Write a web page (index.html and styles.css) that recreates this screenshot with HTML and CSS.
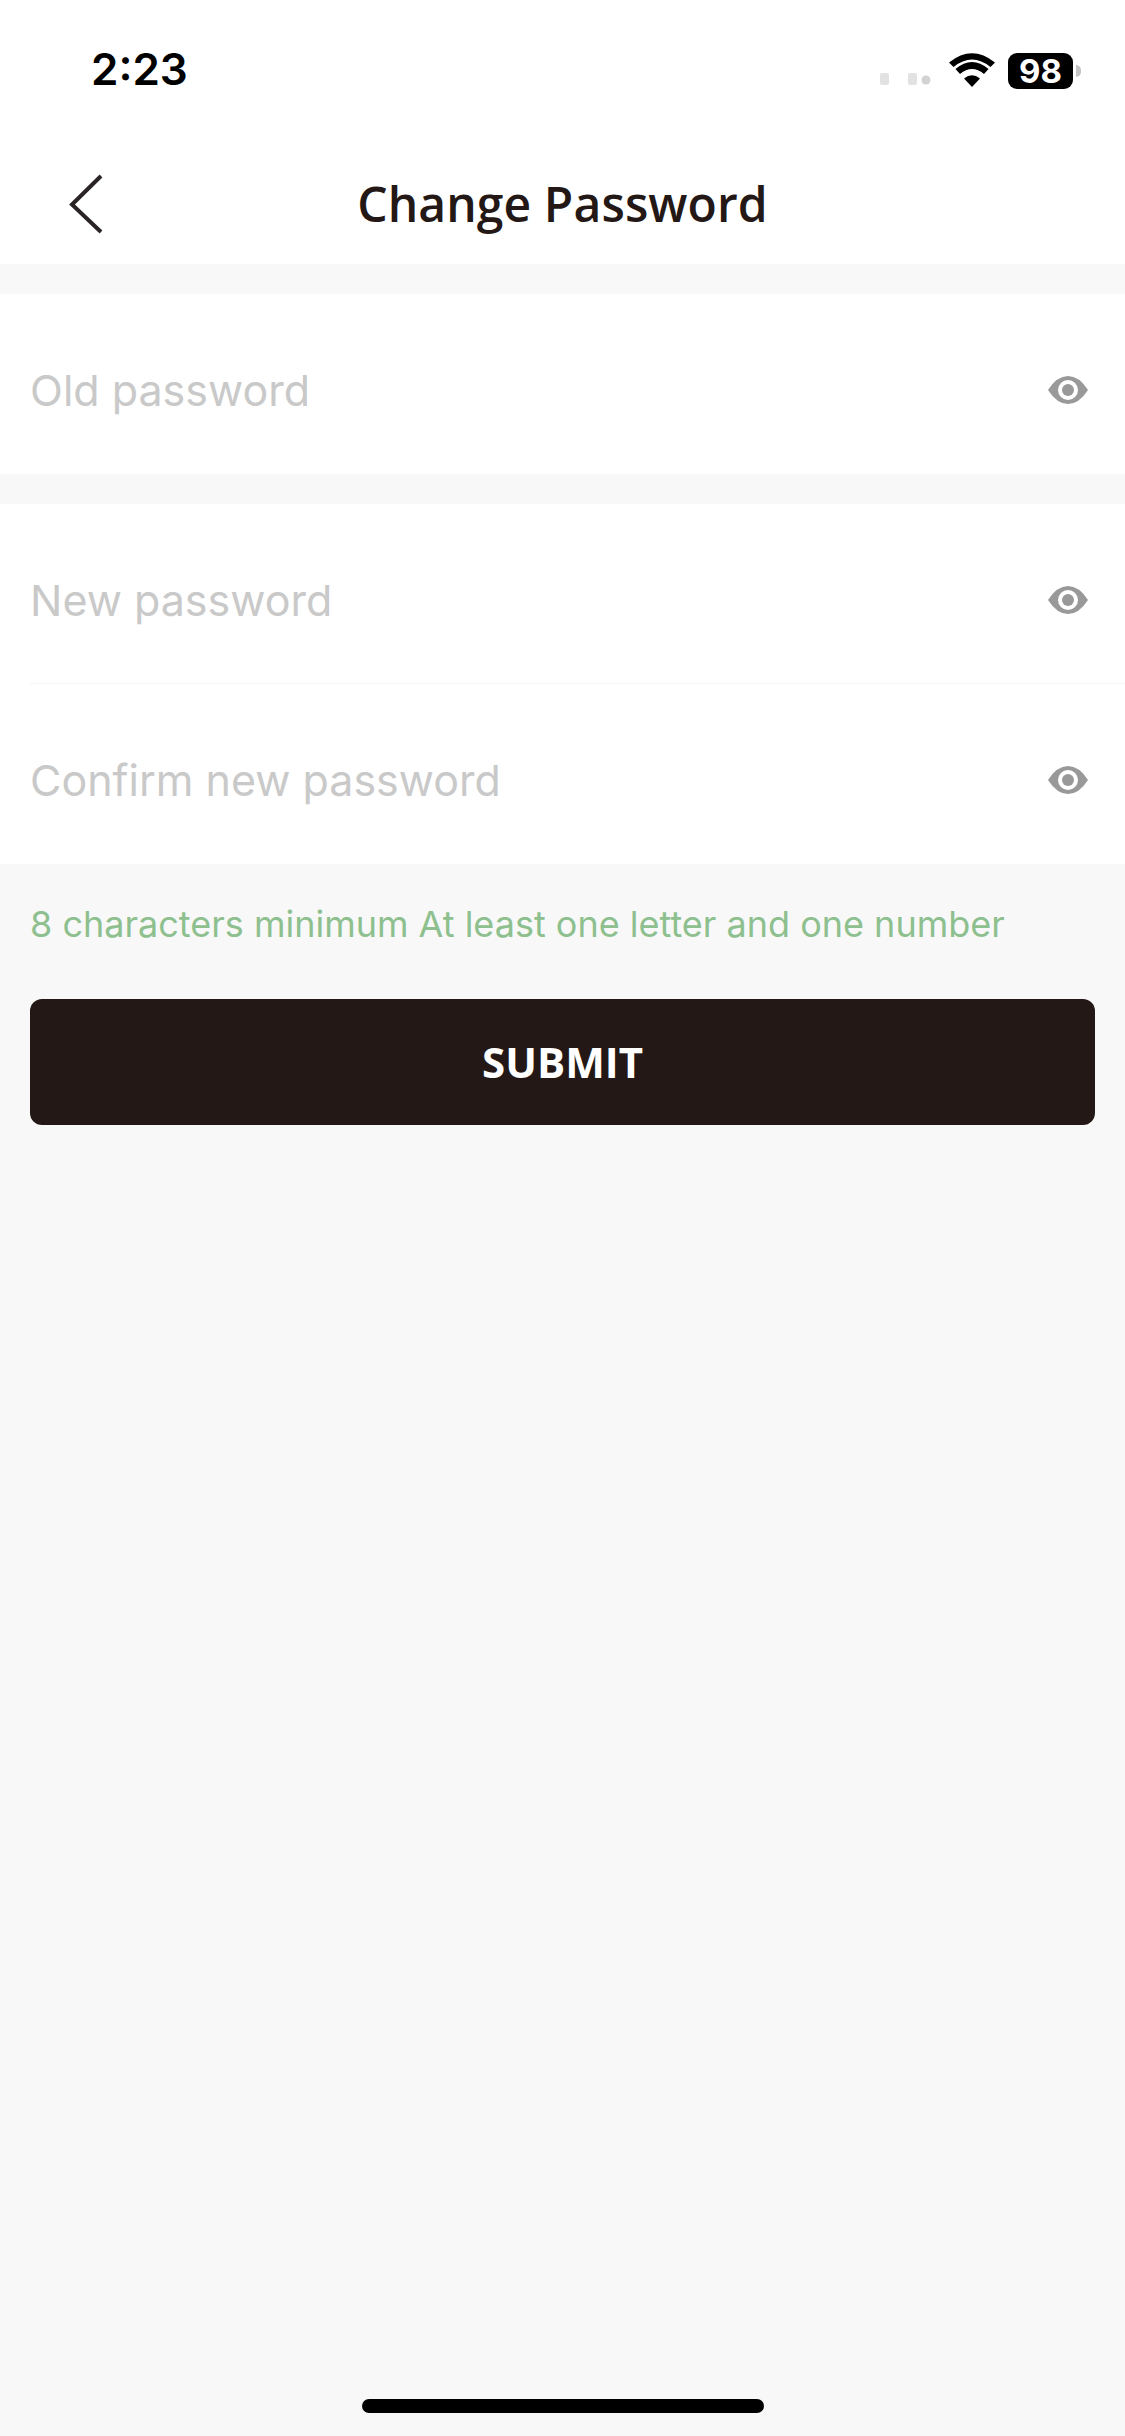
FILE: index.html
```html
<!DOCTYPE html>
<html lang="en">
<head>
<meta charset="utf-8">
<title>Change Password</title>
<link rel="stylesheet" href="styles.css">
</head>
<body>
<div class="screen">
  <header class="top">
    <div class="status">
      <span class="time">2:23</span>
      <div class="status-icons">
        <svg class="signal" width="54" height="14" viewBox="0 0 54 14"><rect x="0" y="1" width="9" height="12" rx="2" fill="#e2e2e2"/><rect x="28" y="1" width="9" height="12" rx="2" fill="#e2e2e2"/><circle cx="46" cy="8" r="4.5" fill="#d2d2d2"/></svg>
        <svg class="wifi" width="46" height="34" viewBox="0 0 46 34"><path d="M23 34 15 25.500Q23 19 31 25.500Z" fill="#000"/><path d="M11 21 6.500 16Q23 2 39.500 16L35 21Q23 11 11 21Z" fill="#000"/><path d="M4.500 14 0 9.500Q23-9 46 9.500L41.500 14Q23-1 4.500 14Z" fill="#000"/></svg>
        <span class="battery"><span class="battery-level">98</span><span class="battery-tip"></span></span>
      </div>
    </div>
    <nav class="nav">
      <svg class="back" width="36" height="62" viewBox="0 0 36 62"><path d="M33 3 4 31.500 33 59" fill="none" stroke="#2a2424" stroke-width="4"/></svg>
      <h1 class="title">Change Password</h1>
    </nav>
  </header>

  <section class="group">
    <div class="field">
      <span class="placeholder">Old password</span>
      <svg class="eye" width="40" height="28" viewBox="0 0 40 28"><path fill-rule="evenodd" d="M0 14Q9 0 20 0T40 14Q31 28 20 28T0 14ZM20 4a10 10 0 1 0 0 20 10 10 0 0 0 0-20Z" fill="#999"/><circle cx="20" cy="14" r="6" fill="#999"/></svg>
    </div>
  </section>

  <section class="group">
    <div class="field field-line">
      <span class="placeholder">New password</span>
      <svg class="eye" width="40" height="28" viewBox="0 0 40 28"><path fill-rule="evenodd" d="M0 14Q9 0 20 0T40 14Q31 28 20 28T0 14ZM20 4a10 10 0 1 0 0 20 10 10 0 0 0 0-20Z" fill="#999"/><circle cx="20" cy="14" r="6" fill="#999"/></svg>
    </div>
    <div class="field">
      <span class="placeholder">Confirm new password</span>
      <svg class="eye" width="40" height="28" viewBox="0 0 40 28"><path fill-rule="evenodd" d="M0 14Q9 0 20 0T40 14Q31 28 20 28T0 14ZM20 4a10 10 0 1 0 0 20 10 10 0 0 0 0-20Z" fill="#999"/><circle cx="20" cy="14" r="6" fill="#999"/></svg>
    </div>
  </section>

  <p class="hint">8 characters minimum At least one letter and one number</p>
  <button class="submit" type="button">SUBMIT</button>

  <div class="home-bar"></div>
</div>
</body>
</html>
```

FILE: styles.css
```css
* { box-sizing: border-box; }
html, body { margin: 0; padding: 0; }
.screen {
  width: 1125px;
  height: 2436px;
  background: #f8f8f8;
  display: flex;
  flex-direction: column;
  position: relative;
  overflow: hidden;
}
.top { background: #fff; height: 264px; }
.status {
  height: 136px;
  display: flex;
  justify-content: space-between;
  padding: 45px 44px 0 91px;
}
.time {
  font: 600 44px/48px Inter, sans-serif;
  color: #000;
  height: 48px;
}
.status-icons { display: flex; align-items: flex-start; padding-top: 8px; }
.signal { margin-top: 19px; margin-right: 15px; }
.wifi { margin-right: 13px; margin-top: 0; }
.battery { display: flex; align-items: center; height: 36px; }
.battery-level {
  width: 65px;
  height: 36px;
  background: #000;
  border-radius: 9px;
  color: #fff;
  font: 700 33px/36px Inter, sans-serif;
  text-align: center;
}
.battery-tip {
  width: 5px;
  height: 12px;
  margin-left: 3px;
  background: #c4c4c4;
  border-radius: 0 6px 6px 0;
}
.nav {
  height: 128px;
  padding-top: 8px;
  display: flex;
  align-items: center;
  justify-content: center;
  position: relative;
}
.back { position: absolute; left: 68px; top: 37px; }
.title {
  margin: 0;
  font: 600 48px/64px "Open Sans", sans-serif;
  letter-spacing: 0.1px;
  color: #231815;
}
.group { background: #fff; margin-top: 30px; }
.field {
  height: 180px;
  padding: 12px 37px 0 30px;
  display: flex;
  align-items: center;
  justify-content: space-between;
}
.field-line { position: relative; }
.field-line::after {
  content: "";
  position: absolute;
  left: 30px;
  right: 0;
  bottom: 0;
  height: 1px;
  background: #f4f4f4;
}
.placeholder {
  font: 400 43px/56px Inter, sans-serif;
  color: #c9c9c9;
}
.hint {
  margin: 39px 0 0;
  padding-left: 30px;
  font: 400 36px/42px Inter, sans-serif;
  color: #8dc08e;
}
.submit {
  margin: 54px 30px 0;
  height: 126px;
  width: 1065px;
  border: 0;
  border-radius: 12px;
  background: #231815;
  color: #fff;
  font: 700 42px/56px "Open Sans", sans-serif;
}
.home-bar {
  position: absolute;
  left: 362px;
  bottom: 23px;
  width: 402px;
  height: 14px;
  border-radius: 7px;
  background: #000;
}
```
